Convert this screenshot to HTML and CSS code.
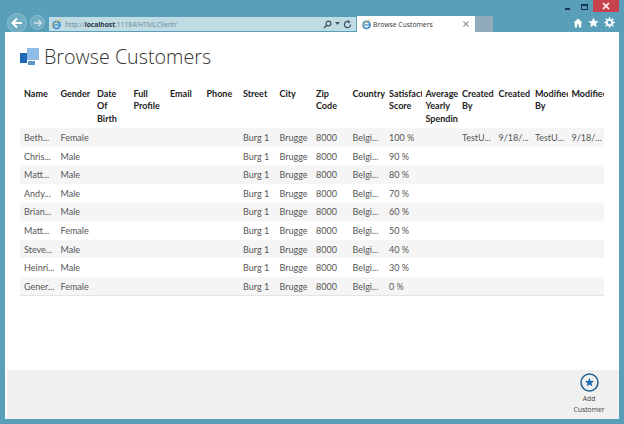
FILE: index.html
```html
<!DOCTYPE html>
<html lang="en">
<head>
    <meta charset="UTF-8">
    <title>Browse Customers</title>
    <link rel="stylesheet" href="styles.css">
</head>
<body>
<div class="window">
    <div class="caption">
        <span class="cap-btn min"></span>
        <span class="cap-btn max"></span>
        <span class="cap-close">
            <svg width="8" height="8" viewBox="0 0 8 8"><path d="M1 1l6 6M7 1l-6 6" stroke="#fff" stroke-width="1.6"/></svg>
        </span>
    </div>

    <div class="toolbar">
        <span class="nav-btn back">
            <svg width="14" height="14" viewBox="0 0 14 14"><path d="M12 7H3M7 2.500L2.500 7 7 11.500" fill="none" stroke="#fff" stroke-width="2"/></svg>
        </span>
        <span class="nav-btn forward">
            <svg width="10" height="10" viewBox="0 0 10 10"><path d="M1 5h7M5.500 2L8.500 5 5.500 8" fill="none" stroke="#cfe3ea" stroke-width="1.300"/></svg>
        </span>
        <div class="address">
            <svg class="ie" width="11" height="11" viewBox="0 0 12 12"><circle cx="6" cy="6.500" r="3.800" fill="none" stroke="#3f8fd0" stroke-width="2"/><path d="M2 6.500h8" stroke="#3f8fd0" stroke-width="1.400"/><path d="M1 9C3 4 7 1 11 1" fill="none" stroke="#e8c14a" stroke-width="1"/></svg>
            <span class="url">http://<b>localhost</b>:11184/HTMLClient/</span>
            <span class="addr-tools">
                <svg width="9" height="9" viewBox="0 0 9 9"><circle cx="5.500" cy="3.500" r="2.400" fill="none" stroke="#3d5561" stroke-width="1.200"/><path d="M3.800 5.200L1 8" stroke="#3d5561" stroke-width="1.400"/></svg>
                <svg width="5" height="4" viewBox="0 0 5 4"><path d="M0 0h5L2.500 3z" fill="#3d5561"/></svg>
                <svg width="9" height="9" viewBox="0 0 9 9"><path d="M7.600 4.500A3.100 3.100 0 1 1 6 1.800" fill="none" stroke="#3d5561" stroke-width="1.200"/><path d="M5 0l2.500 2L5 3.400z" fill="#3d5561"/></svg>
            </span>
        </div>
        <div class="tab">
            <svg class="ie" width="11" height="11" viewBox="0 0 12 12"><circle cx="6" cy="6.500" r="3.800" fill="none" stroke="#3f8fd0" stroke-width="2"/><path d="M2 6.500h8" stroke="#3f8fd0" stroke-width="1.400"/><path d="M1 9C3 4 7 1 11 1" fill="none" stroke="#e8c14a" stroke-width="1"/></svg>
            <span class="tab-title">Browse Customers</span>
            <svg class="tab-x" width="6" height="6" viewBox="0 0 6 6"><path d="M.5.5l5 5M5.500.5l-5 5" stroke="#9a9a9a" stroke-width="1.100"/></svg>
        </div>
        <div class="new-tab"></div>
        <div class="tools">
            <svg width="10" height="10" viewBox="0 0 10 10"><path d="M5 .5L.5 4.800h1.300V9.500h2.300V6.500h1.800v3h2.300V4.800h1.300z" fill="#fff"/></svg>
            <svg width="11" height="11" viewBox="0 0 11 11"><path d="M5.500.5l1.500 3.400 3.600.3-2.700 2.400.8 3.600-3.200-1.900-3.200 1.900.8-3.600L.4 4.200 4 3.900z" fill="#fff"/></svg>
            <svg width="11" height="11" viewBox="0 0 11 11"><circle cx="5.500" cy="5.500" r="2.700" fill="none" stroke="#fff" stroke-width="1.800"/><path d="M5.500.3v2M5.500 8.700v2M.3 5.500h2M8.700 5.500h2M1.800 1.800l1.400 1.400M7.800 7.800l1.400 1.400M9.200 1.800L7.800 3.200M3.200 7.800L1.800 9.200" stroke="#fff" stroke-width="1.500"/></svg>
        </div>
    </div>

    <div class="page">
        <div class="content">
            <div class="heading">
                <svg class="logo" width="19" height="18" viewBox="0 0 19 18">
                    <rect x="7" y="0" width="12" height="12" fill="#8fbce6"/>
                    <rect x="0" y="5" width="7" height="10" fill="#1f69b5"/>
                    <rect x="8" y="13" width="7" height="4" fill="#5e93c4"/>
                </svg>
                <h1>Browse Customers</h1>
            </div>

            <table class="grid">
                <thead>
                    <tr>
                        <th>Name</th><th>Gender</th><th>Date<br>Of<br>Birth</th><th>Full Profile</th>
                        <th>Email</th><th>Phone</th><th>Street</th><th>City</th>
                        <th>Zip Code</th><th>Country</th><th>Satisfaction Score</th><th>Average Yearly Spending</th>
                        <th>Created By</th><th>Created</th><th>Modified By</th><th>Modified</th>
                    </tr>
                </thead>
                <tbody>
                    <tr><td>Beth...</td><td>Female</td><td></td><td></td><td></td><td></td><td>Burg 1</td><td>Brugge</td><td>8000</td><td>Belgi...</td><td>100 %</td><td></td><td>TestU...</td><td>9/18/...</td><td>TestU...</td><td>9/18/...</td></tr>
                    <tr><td>Chris...</td><td>Male</td><td></td><td></td><td></td><td></td><td>Burg 1</td><td>Brugge</td><td>8000</td><td>Belgi...</td><td>90 %</td><td></td><td></td><td></td><td></td><td></td></tr>
                    <tr><td>Matt...</td><td>Male</td><td></td><td></td><td></td><td></td><td>Burg 1</td><td>Brugge</td><td>8000</td><td>Belgi...</td><td>80 %</td><td></td><td></td><td></td><td></td><td></td></tr>
                    <tr><td>Andy...</td><td>Male</td><td></td><td></td><td></td><td></td><td>Burg 1</td><td>Brugge</td><td>8000</td><td>Belgi...</td><td>70 %</td><td></td><td></td><td></td><td></td><td></td></tr>
                    <tr><td>Brian...</td><td>Male</td><td></td><td></td><td></td><td></td><td>Burg 1</td><td>Brugge</td><td>8000</td><td>Belgi...</td><td>60 %</td><td></td><td></td><td></td><td></td><td></td></tr>
                    <tr><td>Matt...</td><td>Female</td><td></td><td></td><td></td><td></td><td>Burg 1</td><td>Brugge</td><td>8000</td><td>Belgi...</td><td>50 %</td><td></td><td></td><td></td><td></td><td></td></tr>
                    <tr><td>Steve...</td><td>Male</td><td></td><td></td><td></td><td></td><td>Burg 1</td><td>Brugge</td><td>8000</td><td>Belgi...</td><td>40 %</td><td></td><td></td><td></td><td></td><td></td></tr>
                    <tr><td>Heinri...</td><td>Male</td><td></td><td></td><td></td><td></td><td>Burg 1</td><td>Brugge</td><td>8000</td><td>Belgi...</td><td>30 %</td><td></td><td></td><td></td><td></td><td></td></tr>
                    <tr><td>Gener...</td><td>Female</td><td></td><td></td><td></td><td></td><td>Burg 1</td><td>Brugge</td><td>8000</td><td>Belgi...</td><td>0 %</td><td></td><td></td><td></td><td></td><td></td></tr>
                </tbody>
            </table>
        </div>

        <div class="footer">
            <div class="add-btn">
                <svg width="19" height="19" viewBox="0 0 19 19">
                    <circle cx="9.500" cy="9.500" r="8.500" fill="none" stroke="#1f5f93" stroke-width="1.500"/>
                    <path d="M9.500 4.800l1.300 3.100 3.300.2-2.600 2.100.9 3.200-2.900-1.800-2.900 1.800.9-3.200-2.600-2.100 3.300-.2z" fill="#1f6bb0"/>
                </svg>
                <span>Add<br>Customer</span>
            </div>
        </div>
    </div>
</div>
</body>
</html>
```

FILE: styles.css
```css
html, body {
    margin: 0;
    padding: 0;
}

body {
    font-family: "Open Sans", "Noto Sans", sans-serif;
    width: 624px;
    height: 424px;
    overflow: hidden;
}

.window {
    width: 624px;
    height: 424px;
    box-sizing: border-box;
    background-color: #5a9fb9;
    display: flex;
    flex-direction: column;
    padding: 0 5px 5px 5px;
}

/* title bar */
.caption {
    height: 13px;
    display: flex;
    justify-content: flex-end;
    align-items: flex-start;
    gap: 5px;
}

.cap-btn {
    display: block;
    box-sizing: border-box;
}

.cap-btn.min {
    width: 5px;
    height: 2px;
    background: #16384a;
    margin-top: 8px;
    margin-right: 6px;
}

.cap-btn.max {
    width: 7px;
    height: 6px;
    margin-top: 4px;
    border: 1px solid #16384a;
    border-top-width: 2px;
}

.cap-close {
    width: 26px;
    height: 12px;
    background: #c9434f;
    display: flex;
    align-items: center;
    justify-content: center;
}

/* address bar and tabs */
.toolbar {
    height: 19px;
    display: flex;
    align-items: center;
}

.nav-btn {
    display: flex;
    align-items: center;
    justify-content: center;
    border-radius: 50%;
    box-sizing: border-box;
    border: 1px solid #8fc0d2;
    background: #6fadc3;
}

.nav-btn.back {
    width: 20px;
    height: 20px;
    margin-left: 2px;
}

.nav-btn.forward {
    width: 15px;
    height: 15px;
    margin-left: 3px;
}

.address {
    width: 307px;
    height: 14px;
    margin-left: 4px;
    align-self: flex-end;
    margin-bottom: 1px;
    background: #bfdbe4;
    display: flex;
    align-items: center;
    padding-left: 2px;
    box-sizing: border-box;
}

.url {
    margin-left: 3px;
    font-size: 6.700px;
    color: #6b8a96;
    white-space: nowrap;
}

.url b {
    color: #23343c;
}

.addr-tools {
    margin-left: auto;
    display: flex;
    align-items: center;
    gap: 3px;
    padding-right: 4px;
}

.tab {
    width: 118px;
    height: 16px;
    margin-left: 1px;
    align-self: flex-end;
    background: #fff;
    display: flex;
    align-items: center;
    padding: 0 6px 0 4px;
    box-sizing: border-box;
}

.tab-title {
    margin-left: 1px;
    font-size: 6.800px;
    color: #333;
    white-space: nowrap;
}

.tab-x {
    margin-left: auto;
}

.new-tab {
    width: 18px;
    height: 16px;
    align-self: flex-end;
    background: #8fabbb;
}

.tools {
    margin-left: auto;
    display: flex;
    align-items: center;
    gap: 5px;
    padding-right: 4px;
}

/* page */
.page {
    flex: 1;
    min-height: 0;
    background: #fff;
    display: flex;
    flex-direction: column;
}

.content {
    flex: 1;
    padding: 0 14px 0 15px;
}

.heading {
    display: flex;
    align-items: center;
    height: 50px;
}

h1 {
    margin: 0 0 0 5px;
    font-size: 19.700px;
    font-weight: 300;
    color: #333;
    line-height: 50px;
}

.grid {
    width: 584px;
    table-layout: fixed;
    border-collapse: collapse;
    margin-top: 1px;
}

.grid th {
    font-family: Lato, "Open Sans", sans-serif;
    font-size: 9px;
    font-weight: 700;
    line-height: 12.400px;
    color: #222;
    text-align: left;
    vertical-align: top;
    padding: 5px 0 3px 4px;
    overflow: hidden;
}

.grid td {
    font-family: Lato, "Open Sans", sans-serif;
    font-size: 9px;
    line-height: 12px;
    height: 18.600px;
    padding: 1px 0 0 4px;
    color: #555;
    white-space: nowrap;
    overflow: hidden;
    box-sizing: border-box;
}

.grid tbody tr:nth-child(odd) {
    background: #f5f5f5;
}

.grid tbody tr:last-child {
    border-bottom: 1px solid #e4e4e4;
}

/* command bar */
.footer {
    height: 49px;
    margin-left: 2px;
    background: #f0f0f0;
    display: flex;
    justify-content: flex-end;
    padding-right: 12px;
}

.add-btn {
    width: 36px;
    display: flex;
    flex-direction: column;
    align-items: center;
    padding-top: 3px;
    font-size: 6.800px;
    line-height: 11px;
    text-align: center;
    color: #444;
}

.add-btn span {
    margin-top: 1px;
}
```
